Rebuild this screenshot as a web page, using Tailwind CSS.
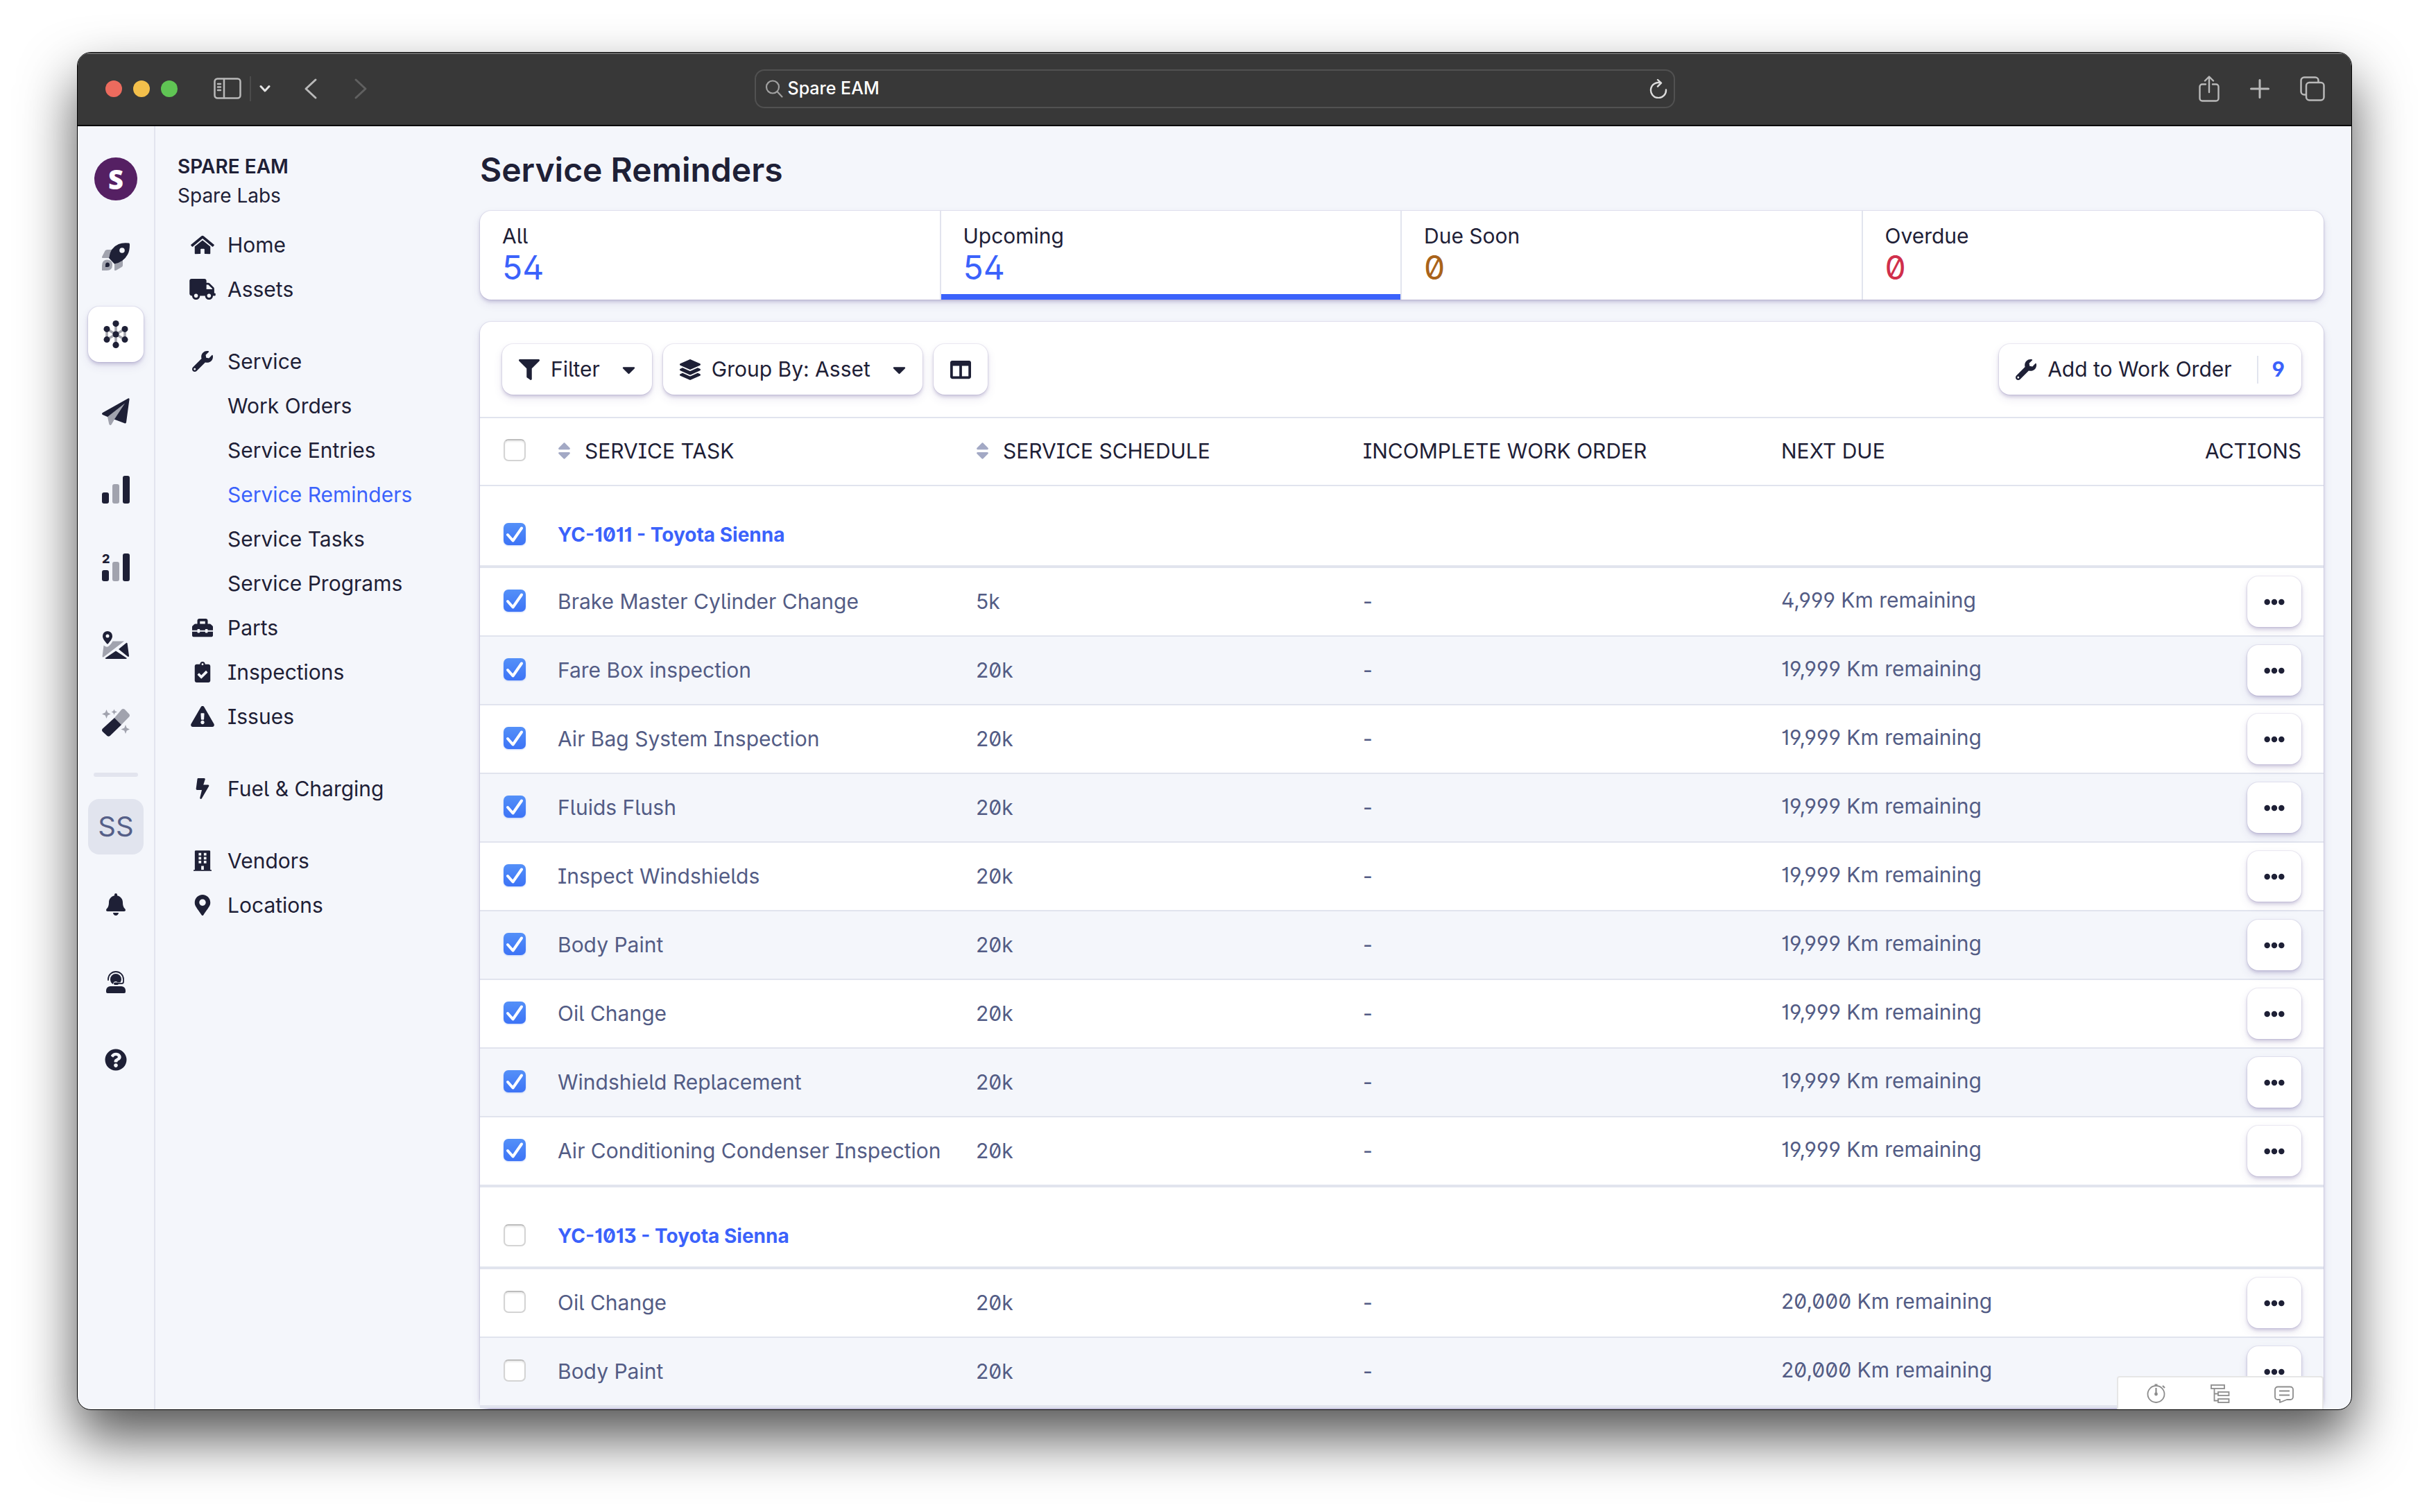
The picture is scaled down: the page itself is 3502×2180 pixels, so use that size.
<!DOCTYPE html>
<html lang="en">
<head>
<meta charset="utf-8">
<title>Spare EAM</title>
<script src="https://cdn.jsdelivr.net/npm/@tailwindcss/browser@4"></script>
</head>
<body class="bg-white font-['Inter',sans-serif] text-[#1e2036]">

<svg class="hidden" aria-hidden="true">
  <symbol id="i-home" viewBox="0 0 576 512"><path d="M280.37 148.26L96 300.11V464a16 16 0 0 0 16 16l112.06-.29a16 16 0 0 0 15.92-16V368a16 16 0 0 1 16-16h64a16 16 0 0 1 16 16v95.64a16 16 0 0 0 16 16.05L464 480a16 16 0 0 0 16-16V300L295.67 148.26a12.19 12.19 0 0 0-15.3 0zM571.6 251.47L318.47 43a48 48 0 0 0-61 0L4.34 251.47a12 12 0 0 0-1.6 16.9l25.5 31A12 12 0 0 0 45.15 301l235.22-193.74a12.19 12.19 0 0 1 15.3 0L530.9 301a12 12 0 0 0 16.9-1.6l25.5-31a12 12 0 0 0-1.7-16.93z"/></symbol>
  <symbol id="i-truck" viewBox="0 0 640 512"><path d="M624 352h-16V243.9c0-12.7-5.1-24.9-14.1-33.9L494 110.1c-9-9-21.2-14.1-33.9-14.1H416V48c0-26.5-21.5-48-48-48H48C21.5 0 0 21.5 0 48v320c0 26.5 21.500 48 48 48h16c0 53 43 96 96 96s96-43 96-96h128c0 53 43 96 96 96s96-43 96-96h48c8.800 0 16-7.200 16-16v-32c0-8.800-7.200-16-16-16zM160 464c-26.500 0-48-21.500-48-48s21.500-48 48-48 48 21.500 48 48-21.500 48-48 48zm320 0c-26.500 0-48-21.500-48-48s21.500-48 48-48 48 21.500 48 48-21.500 48-48 48zm80-208H416V144h44.100l99.900 99.900V256z"/></symbol>
  <symbol id="i-wrench" viewBox="0 0 512 512"><path d="M507.73 109.1c-2.24-9.03-13.54-12.09-20.12-5.51l-74.36 74.36-67.88-11.31-11.31-67.88 74.36-74.36c6.62-6.62 3.43-17.9-5.66-20.16-47.38-11.74-99.55.91-136.58 37.93-39.64 39.64-50.55 97.1-34.05 147.2L18.74 402.76c-24.99 24.99-24.99 65.51 0 90.5 24.99 24.99 65.51 24.99 90.5 0l213.21-213.21c50.12 16.71 107.47 5.68 147.37-34.22 37.07-37.07 49.7-89.32 37.91-136.73zM64 472c-13.25 0-24-10.75-24-24 0-13.26 10.75-24 24-24s24 10.74 24 24c0 13.25-10.75 24-24 24z"/></symbol>
  <symbol id="i-toolbox" viewBox="0 0 512 512"><path d="M502.63 214.63l-45.25-45.25c-6-6-14.14-9.37-22.63-9.37H384V80c0-26.51-21.49-48-48-48H176c-26.51 0-48 21.49-48 48v80H77.25c-8.49 0-16.62 3.37-22.63 9.37L9.37 214.63c-6 6-9.37 14.14-9.37 22.63V320h128v-16c0-8.84 7.16-16 16-16h32c8.84 0 16 7.16 16 16v16h128v-16c0-8.84 7.16-16 16-16h32c8.84 0 16 7.16 16 16v16h128v-82.75c0-8.48-3.37-16.62-9.37-22.62zM320 160H192V96h128v64zm64 208c0 8.84-7.16 16-16 16h-32c-8.84 0-16-7.16-16-16v-16H192v16c0 8.84-7.16 16-16 16h-32c-8.84 0-16-7.16-16-16v-16H0v96c0 17.67 14.33 32 32 32h448c17.67 0 32-14.33 32-32v-96H384v16z"/></symbol>
  <symbol id="i-clip" viewBox="0 0 384 512"><path d="M336 64h-80c0-35.3-28.7-64-64-64s-64 28.7-64 64H48C21.5 64 0 85.5 0 112v352c0 26.5 21.5 48 48 48h288c26.5 0 48-21.5 48-48V112c0-26.5-21.5-48-48-48zM192 40c13.3 0 24 10.7 24 24s-10.7 24-24 24-24-10.7-24-24 10.7-24 24-24zm121.200 231.800l-143 141.800c-4.700 4.700-12.300 4.600-17-.1l-82.600-83.300c-4.700-4.700-4.600-12.300.1-17L99.100 285c4.700-4.700 12.300-4.600 17 .1l46 46.400 106-105.200c4.700-4.700 12.300-4.600 17 .1l28.200 28.400c4.700 4.800 4.600 12.300-.1 17z"/></symbol>
  <symbol id="i-warn" viewBox="0 0 576 512"><path d="M569.517 440.013C587.975 472.007 564.806 512 527.94 512H48.054c-36.937 0-59.999-40.055-41.577-71.987L246.423 23.985c18.467-32.009 64.72-31.951 83.154 0l239.94 416.028zM288 354c-25.405 0-46 20.595-46 46s20.595 46 46 46 46-20.595 46-46-20.595-46-46-46zm-43.673-165.346l7.418 136c.347 6.364 5.609 11.346 11.982 11.346h48.546c6.373 0 11.635-4.982 11.982-11.346l7.418-136c.375-6.874-5.098-12.654-11.982-12.654h-63.383c-6.884 0-12.356 5.78-11.981 12.654z"/></symbol>
  <symbol id="i-bolt" viewBox="0 0 320 512"><path d="M296 160H180.6l42.6-129.8C227.2 15 215.7 0 200 0H56C44 0 33.8 8.9 32.2 20.8l-32 240C-1.7 275.2 9.5 288 24 288h118.7L96.6 482.5c-3.6 15.2 8 29.5 23.3 29.5 8.4 0 16.4-4.4 20.8-12l176-304c9.3-15.9-2.2-36-20.7-36z"/></symbol>
  <symbol id="i-building" viewBox="0 0 448 512"><path fill-rule="evenodd" d="M436 480h-20V24c0-13.300-10.700-24-24-24H56C42.700 0 32 10.700 32 24v456H12c-6.600 0-12 5.400-12 12v20h448v-20c0-6.600-5.400-12-12-12zM128 64h64v64h-64zM256 64h64v64h-64zM128 160h64v64h-64zM256 160h64v64h-64zM128 256h64v64h-64zM256 256h64v64h-64zM192 384h64v96h-64z"/></symbol>
  <symbol id="i-pin" viewBox="0 0 384 512"><path d="M172.268 501.67C26.97 291.031 0 269.413 0 192 0 85.961 85.961 0 192 0s192 85.961 192 192c0 77.413-26.97 99.031-172.268 309.67-9.535 13.774-29.93 13.773-39.464 0zM192 272c44.183 0 80-35.817 80-80s-35.817-80-80-80-80 35.817-80 80 35.817 80 80 80z"/></symbol>
  <symbol id="i-filter" viewBox="0 0 512 512"><path d="M487.976 0H24.028C2.71 0-8.047 25.866 7.058 40.971L192 225.941V432c0 7.831 3.821 15.17 10.237 19.662l80 55.98C298.02 518.69 320 507.493 320 487.98V225.941l184.947-184.97C520.021 25.896 509.338 0 487.976 0z"/></symbol>
  <symbol id="i-layers" viewBox="0 0 512 512"><path d="M12.41 148.02l232.94 105.67c6.8 3.09 14.49 3.09 21.29 0l232.94-105.67c16.55-7.51 16.55-32.52 0-40.03L266.65 2.31a25.607 25.607 0 0 0-21.29 0L12.41 107.98c-16.55 7.51-16.55 32.53 0 40.04zm487.18 88.28l-58.09-26.33-161.64 73.27c-7.56 3.43-15.59 5.17-23.86 5.17s-16.29-1.74-23.86-5.17L70.51 209.97l-58.1 26.33c-16.55 7.5-16.55 32.5 0 40l232.94 105.59c6.8 3.08 14.49 3.08 21.29 0L499.59 276.3c16.55-7.5 16.55-32.5 0-40zm0 127.8l-57.87-26.23-161.86 73.37c-7.56 3.43-15.59 5.17-23.86 5.17s-16.29-1.74-23.86-5.17L70.29 337.87 12.41 364.1c-16.55 7.5-16.55 32.5 0 40l232.94 105.59c6.8 3.08 14.49 3.08 21.29 0L499.59 404.1c16.55-7.5 16.55-32.5 0-40z"/></symbol>
  <symbol id="i-caret" viewBox="0 0 320 512"><path d="M31.3 192h257.3c17.8 0 26.7 21.5 14.1 34.1L174.1 354.8c-7.8 7.8-20.5 7.8-28.3 0L17.2 226.1C4.6 213.5 13.5 192 31.3 192z"/></symbol>
  <symbol id="i-columns" viewBox="0 0 512 512"><path d="M464 32H48C21.49 32 0 53.49 0 80v352c0 26.51 21.49 48 48 48h416c26.51 0 48-21.49 48-48V80c0-26.51-21.49-48-48-48zM224 416H64V160h160v256zm224 0H288V160h160v256z"/></symbol>
  <symbol id="i-sort" viewBox="0 0 320 512"><path d="M41 288h238c21.400 0 32.100 25.900 17 41L177 448c-9.400 9.400-24.600 9.400-33.900 0L24 329c-15.100-15.100-4.400-41 17-41zm255-105L177 64c-9.400-9.400-24.600-9.400-33.900 0L24 183c-15.100 15.100-4.400 41 17 41h238c21.400 0 32.100-25.900 17-41z"/></symbol>
  <symbol id="i-dots" viewBox="0 0 512 512"><path d="M328 256c0 39.8-32.2 72-72 72s-72-32.2-72-72 32.2-72 72-72 72 32.200 72 72zm104-72c-39.800 0-72 32.200-72 72s32.200 72 72 72 72-32.200 72-72-32.200-72-72-72zm-352 0c-39.800 0-72 32.200-72 72s32.200 72 72 72 72-32.200 72-72-32.200-72-72-72z"/></symbol>
  <symbol id="i-bell" viewBox="0 0 448 512"><path d="M224 512c35.32 0 63.97-28.65 63.97-64H160.03c0 35.35 28.65 64 63.97 64zm215.39-149.71c-19.32-20.76-55.47-51.99-55.47-154.29 0-77.7-54.48-139.9-127.94-155.16V32c0-17.67-14.32-32-31.98-32s-31.98 14.33-31.98 32v20.84C118.56 68.1 64.08 130.3 64.08 208c0 102.3-36.15 133.53-55.47 154.29-6 6.45-8.66 14.16-8.61 21.71.11 16.4 12.98 32 32.1 32h383.8c19.12 0 32-15.6 32.1-32 .05-7.55-2.61-15.27-8.61-21.71z"/></symbol>
  <symbol id="i-help" viewBox="0 0 512 512"><path d="M504 256c0 136.997-111.043 248-248 248S8 392.997 8 256C8 119.083 119.043 8 256 8s248 111.083 248 248zM262.655 90c-54.497 0-89.255 22.957-116.549 63.758-3.536 5.286-2.353 12.415 2.715 16.258l34.699 26.31c5.205 3.947 12.621 3.008 16.665-2.122 17.864-22.658 30.113-35.797 57.303-35.797 20.429 0 45.698 13.148 45.698 32.958 0 14.976-12.363 22.667-32.534 33.976C247.128 238.528 216 254.941 216 296v4c0 6.627 5.373 12 12 12h56c6.627 0 12-5.373 12-12v-1.333c0-28.462 83.186-29.647 83.186-106.667 0-58.002-60.165-102-116.531-102zM256 338c-25.365 0-46 20.635-46 46 0 25.364 20.635 46 46 46s46-20.636 46-46c0-25.365-20.635-46-46-46z"/></symbol>
  <symbol id="i-check" viewBox="0 0 32 32"><path d="M6 17l7.500 8.500L26 7.500" fill="none" stroke="#fff" stroke-width="4" stroke-linecap="round" stroke-linejoin="round"/></symbol>
</svg>

<div class="flex h-screen flex-col px-[111px] pt-[75px] pb-[147px]">
  <div class="relative flex min-h-0 flex-1 flex-col overflow-hidden rounded-[20px] border border-black bg-[#f4f6fb] shadow-[0_40px_80px_rgba(0,0,0,0.67)]">

    <!-- Browser toolbar -->
    <header class="grid h-[106px] shrink-0 grid-cols-[1fr_1327px_1fr] items-center border-b-2 border-black bg-[#383838] text-[#b9b9b9] shadow-[inset_0_2px_0_#6b6b6b]">
      <div class="flex items-center pl-10">
        <div class="flex gap-4">
          <span class="size-6 rounded-full bg-[#ec6b5e]"></span>
          <span class="size-6 rounded-full bg-[#f3bf4b]"></span>
          <span class="size-6 rounded-full bg-[#60c554]"></span>
        </div>
        <button class="ml-[52px]" aria-label="Toggle sidebar"><svg class="block h-8 w-10" viewBox="0 0 40 32" fill="none" stroke="currentColor" stroke-width="2.500" stroke-linecap="round"><rect x="1.500" y="1.500" width="37" height="28" rx="4"/><path d="M15 2v27M6 9h4M6 13.500h4M6 18h4"/></svg></button>
        <span class="ml-3 h-9 w-0.5 bg-[#4b4b4b]"></span>
        <button class="ml-3" aria-label="Tab groups"><svg class="block h-3 w-4" viewBox="0 0 16 12" fill="none" stroke="#e4e4e4" stroke-width="3" stroke-linecap="round" stroke-linejoin="round"><path d="M2 2.500l6 6.500 6-6.500"/></svg></button>
        <button class="ml-12" aria-label="Back"><svg class="block h-8 w-5" viewBox="0 0 20 32" fill="none" stroke="currentColor" stroke-width="3" stroke-linecap="round" stroke-linejoin="round"><path d="M17 3L3 16l14 13"/></svg></button>
        <button class="ml-[52px] text-[#606060]" aria-label="Forward"><svg class="block h-8 w-5" viewBox="0 0 20 32" fill="none" stroke="currentColor" stroke-width="3" stroke-linecap="round" stroke-linejoin="round"><path d="M3 3l14 13L3 29"/></svg></button>
      </div>
      <div class="flex h-14 items-center rounded-[14px] border-2 border-[#515151] pr-2 pl-3">
        <svg class="size-7 shrink-0 text-[#a0a0a0]" viewBox="0 0 28 28" fill="none" stroke="currentColor" stroke-width="2.200" stroke-linecap="round"><circle cx="12" cy="11.500" r="9"/><path d="M18.500 18l7 7.500"/></svg>
        <input class="ml-1.5 min-w-0 flex-1 bg-transparent text-[25px] font-medium text-white outline-none" aria-label="Address" value="Spare EAM">
        <button class="text-[#dcdcdc]" aria-label="Reload"><svg class="block h-7 w-7" viewBox="0 0 28 28" fill="none" stroke="currentColor" stroke-width="2.400" stroke-linecap="round" stroke-linejoin="round"><path d="M25 15.500A11 11 0 1 1 17 5.500M13 1l5 4.700-5 5"/></svg></button>
      </div>
      <div class="flex items-center justify-end gap-11 pr-[38px]">
        <button aria-label="Share"><svg class="block h-[38px] w-[30px]" viewBox="0 0 30 38" fill="none" stroke="currentColor" stroke-width="2.400" stroke-linecap="round" stroke-linejoin="round"><path d="M10 12.500H5A3.500 3.500 0 0 0 1.500 16v17A3.500 3.500 0 0 0 5 36.500h20a3.500 3.500 0 0 0 3.500-3.500V16a3.500 3.500 0 0 0-3.500-3.500h-5M15 24V2M9 7.500L15 1.500l6 6"/></svg></button>
        <button aria-label="New tab"><svg class="block size-7" viewBox="0 0 28 28" fill="none" stroke="currentColor" stroke-width="3" stroke-linecap="round"><path d="M14 1.500v25M1.500 14h25"/></svg></button>
        <button aria-label="Tab overview"><svg class="block size-9" viewBox="0 0 36 36" fill="none" stroke="currentColor" stroke-width="2.500" stroke-linejoin="round"><rect x="9" y="9" width="25.500" height="25.500" rx="4.500"/><path d="M9 26.500H6A4.500 4.500 0 0 1 1.500 22V6A4.500 4.500 0 0 1 6 1.500h16A4.500 4.500 0 0 1 26.500 6v3"/></svg></button>
      </div>
    </header>

    <div class="flex min-h-0 flex-1 [font-feature-settings:'ss02','zero','cv01','cv02','cv04','cv05','cv08','cv09']">

      <!-- App rail -->
      <nav class="flex w-28 shrink-0 flex-col items-center gap-8 border-r-2 border-[#e2e4ee] pt-9" aria-label="Apps">
        <a href="#" class="grid size-20 place-items-center" aria-label="Spare"><span class="grid size-[62px] place-items-center rounded-full bg-[#552063] font-['Noto_Sans',sans-serif] text-[38px] leading-none font-black text-white">S</span></a>
        <a href="#" class="grid size-20 place-items-center" aria-label="Launch"><svg class="size-10" viewBox="0 0 40 40"><g fill="#a1a3ae"><path d="M1 22c-1 0-1.300-1-.8-2L4.500 11.500Q5.500 10 7.500 10H15Q11 15 10 22zM30 25v7.500q0 1.500-1.500 2.500L20 40q-2 .8-2-1v-9q7-1 12-5z"/><path d="M0 40v-7q0-8.500 7.500-8.500T15 32q0 8-8 8z"/></g><path d="M39 .6Q40 1 40 3q0 9-3 14-6 11-19 13.500L10 22Q12 7 24 2 30-.5 39 .6z" fill="#1e2036"/><circle cx="29" cy="11" r="3.800" fill="#f4f6fb"/><path d="M5 35v-3q0-3.500 3-3.500t3 3.500q0 3-3 3z" fill="#1e2036"/></svg></a>
        <a href="#" class="grid size-20 place-items-center rounded-2xl bg-white shadow-[0_0_0_1px_rgba(70,50,130,0.08),0_3px_5px_rgba(70,50,130,0.22),0_6px_14px_rgba(70,50,130,0.10)]" aria-label="Network" aria-current="page"><svg class="size-10" viewBox="0 0 40 40"><path d="M20 4v32M7 12.500v15M33 12.500v15M7 12.500l26 15M33 12.500L7 27.500" stroke="#a5a6ae" stroke-width="3.600"/><g fill="#1e2036"><circle cx="20" cy="20" r="4.600"/><circle cx="20" cy="4.600" r="4.600"/><circle cx="20" cy="35.400" r="4.600"/><circle cx="7" cy="12.400" r="4.500"/><circle cx="33" cy="12.400" r="4.500"/><circle cx="7" cy="27.600" r="4.500"/><circle cx="33" cy="27.600" r="4.500"/></g></svg></a>
        <a href="#" class="grid size-20 place-items-center" aria-label="Engage"><svg class="size-10" viewBox="0 0 40 40"><path d="M38 .3Q39.800 0 39.500 2L35 35q-.4 2-2.400 1.300L17.500 30.500 8 27 1 24q-2-1.500 0-3z" fill="#1e2036"/><path d="M33 7.500L8 27l2.300 10.500q1.700 3 3.700 0L18 30.500z" fill="#a1a3ae"/></svg></a>
        <a href="#" class="grid size-20 place-items-center" aria-label="Analytics"><svg class="size-10" viewBox="0 0 40 40"><rect y="24" width="10" height="16" rx="3" fill="#1e2036"/><rect x="15" y="12" width="10" height="28" rx="3" fill="#a1a3ae"/><rect x="30" width="10" height="40" rx="3" fill="#1e2036"/></svg></a>
        <a href="#" class="grid size-20 place-items-center" aria-label="Analytics 2"><svg class="h-12 w-10" viewBox="0 -4 40 48"><text x="0" y="14" font-size="18" font-weight="800" fill="#1e2036">2</text><rect y="24" width="10" height="16" rx="3" fill="#1e2036"/><rect x="15" y="12" width="10" height="28" rx="3" fill="#a1a3ae"/><rect x="30" width="10" height="40" rx="3" fill="#1e2036"/></svg></a>
        <a href="#" class="grid size-20 place-items-center" aria-label="Map"><svg class="size-10" viewBox="0 0 40 40"><path d="M15.500 14.500H32L2 37.500q-1.500.5-1.400-1.500L2.500 20.500q4.500 4 8 .5 3.500-3.500 5-6.500z" fill="#a1a3ae"/><g fill="#1e2036"><path d="M8 0a7 7 0 0 1 7 7.200c0 3.800-4 8.300-6 10.800q-1 1-2 0C5 15.500 1 11 1 7.200A7 7 0 0 1 8 0z"/><path d="M24 26l11-9q1.300-.7 1.600.8L39 35.500q0 2.200-2 1zM20 28.500L36 39q-.5 1-2 1H6.500Q5 40 4.500 39z"/></g><circle cx="8" cy="7" r="2.500" fill="#f4f6fb"/></svg></a>
        <a href="#" class="grid size-20 place-items-center" aria-label="Automations"><svg class="size-10" viewBox="0 0 40 40"><path d="M18 13L28.500.8q2-1.600 4.300 0l6.400 6.600q1.600 2 0 4L28 23zM6.500 1l1.700 4.300L12.500 7.500 8.200 9.500 6.500 14 4.800 9.500 0 7.500l4.800-2.200zM17.500.5l1.200 2.800L22 4.500l-3.300 1.300-1.200 3-1.200-3L13.500 4.500l2.800-1.200zM34 23l1.700 4.500L40 29.500l-4.300 2L34 36l-1.700-4.500-4.800-2 4.800-2z" fill="#a1a3ae"/><path d="M18 13L28 23 11.500 39q-2 1.600-4 0L.8 32.800q-1.600-2 0-4z" fill="#1e2036"/></svg></a>
        <hr class="h-1.5 w-16 shrink-0 rounded-full border-0 bg-[#e2e4ee]">
        <button class="grid size-20 place-items-center rounded-2xl bg-[#e1e4ee] text-[40px] leading-none text-[#555f88]">SS</button>
        <a href="#" class="grid size-20 place-items-center" aria-label="Notifications"><svg class="h-8 w-7 fill-current"><use href="#i-bell"/></svg></a>
        <a href="#" class="grid size-20 place-items-center" aria-label="Support"><svg class="h-8 w-7" viewBox="0 0 28 32" fill="#1e2036"><path d="M6 22h16a6 6 0 0 1 6 6v2a2 2 0 0 1-2 2H2a2 2 0 0 1-2-2v-2a6 6 0 0 1 6-6z"/><path d="M14 4a8 8 0 0 1 8 8q0 2.500-1.500 4.500h-3.500q-1-1.500-3-1.500-3.500 0-4 4Q6 17 6 12a8 8 0 0 1 8-8z"/><path d="M3 13v-1A11 11 0 0 1 25 12v3.500q0 2.700-3 2.700h-8" fill="none" stroke="#1e2036" stroke-width="1.800" stroke-linecap="round"/><rect x="11" y="16.600" width="7" height="3.400" rx="1.700"/></svg></a>
        <a href="#" class="grid size-20 place-items-center" aria-label="Help"><svg class="size-8 fill-current"><use href="#i-help"/></svg></a>
      </nav>

      <!-- Section menu -->
      <aside class="w-[436px] shrink-0 pt-[37px] pl-8">
        <p class="text-[28px] leading-[42px] font-semibold">SPARE EAM</p>
        <p class="text-[28px] leading-[42px]">Spare Labs</p>
        <nav class="mt-[18px] text-[30px]" aria-label="Sections">
          <a href="#" class="flex h-16 items-center gap-4 pl-4"><span class="grid w-10 place-items-center"><svg class="h-[30px] w-[34px] fill-current"><use href="#i-home"/></svg></span>Home</a>
          <a href="#" class="flex h-16 items-center gap-4 pl-4"><span class="grid w-10 place-items-center"><svg class="h-[30px] w-[38px] fill-current"><use href="#i-truck"/></svg></span>Assets</a>
          <a href="#" class="mt-10 flex h-16 items-center gap-4 pl-4"><span class="grid w-10 place-items-center"><svg class="size-[30px] fill-current"><use href="#i-wrench"/></svg></span>Service</a>
          <a href="#" class="flex h-16 items-center pl-[72px]">Work Orders</a>
          <a href="#" class="flex h-16 items-center pl-[72px]">Service Entries</a>
          <a href="#" class="flex h-16 items-center pl-[72px] text-[#3b62fb]" aria-current="page">Service Reminders</a>
          <a href="#" class="flex h-16 items-center pl-[72px]">Service Tasks</a>
          <a href="#" class="flex h-16 items-center pl-[72px]">Service Programs</a>
          <a href="#" class="flex h-16 items-center gap-4 pl-4"><span class="grid w-10 place-items-center"><svg class="size-[30px] fill-current"><use href="#i-toolbox"/></svg></span>Parts</a>
          <a href="#" class="flex h-16 items-center gap-4 pl-4"><span class="grid w-10 place-items-center"><svg class="h-[30px] w-6 fill-current"><use href="#i-clip"/></svg></span>Inspections</a>
          <a href="#" class="flex h-16 items-center gap-4 pl-4"><span class="grid w-10 place-items-center"><svg class="h-[30px] w-[34px] fill-current"><use href="#i-warn"/></svg></span>Issues</a>
          <a href="#" class="mt-10 flex h-16 items-center gap-4 pl-4"><span class="grid w-10 place-items-center"><svg class="h-[30px] w-5 fill-current"><use href="#i-bolt"/></svg></span>Fuel &amp; Charging</a>
          <a href="#" class="mt-10 flex h-16 items-center gap-4 pl-4"><span class="grid w-10 place-items-center"><svg class="h-[30px] w-[26px] fill-current"><use href="#i-building"/></svg></span>Vendors</a>
          <a href="#" class="flex h-16 items-center gap-4 pl-4"><span class="grid w-10 place-items-center"><svg class="h-[30px] w-6 fill-current"><use href="#i-pin"/></svg></span>Locations</a>
        </nav>
      </aside>

      <main class="min-w-0 flex-1 pt-8 pr-10 pl-8">
        <h1 class="text-[48px] leading-[62px] font-semibold">Service Reminders</h1>

        <div class="mt-7 grid h-32 grid-cols-4 overflow-hidden rounded-2xl bg-white text-[30px] shadow-[0_0_0_1px_rgba(70,50,130,0.08),0_3px_5px_rgba(70,50,130,0.22),0_6px_14px_rgba(70,50,130,0.10)]">
          <button class="flex flex-col items-start border-r-2 border-[#e2e4ee] px-8 pt-4"><span class="leading-10">All</span><span class="text-[48px] leading-[52px] text-[#3b62fb]">54</span></button>
          <button class="flex flex-col items-start border-r-2 border-[#e2e4ee] px-8 pt-4 shadow-[inset_0_-8px_0_#3b62fb]"><span class="leading-10">Upcoming</span><span class="text-[48px] leading-[52px] text-[#3b62fb]">54</span></button>
          <button class="flex flex-col items-start border-r-2 border-[#e2e4ee] px-8 pt-4"><span class="leading-10">Due Soon</span><span class="text-[48px] leading-[52px] text-[#a9631a]">0</span></button>
          <button class="flex flex-col items-start px-8 pt-4"><span class="leading-10">Overdue</span><span class="text-[48px] leading-[52px] text-[#d02f4b]">0</span></button>
        </div>

        <section class="mt-8 rounded-2xl bg-white text-[30px] shadow-[0_0_0_1px_rgba(70,50,130,0.08),0_3px_5px_rgba(70,50,130,0.22),0_6px_14px_rgba(70,50,130,0.10)]">
          <div class="flex items-center gap-4 border-b-2 border-[#e1e4ee] p-8">
            <button class="flex h-[73px] items-center rounded-2xl bg-white px-6 shadow-[0_0_0_1px_rgba(70,50,130,0.08),0_3px_5px_rgba(70,50,130,0.22),0_6px_14px_rgba(70,50,130,0.10)]"><svg class="mr-4 size-[30px] fill-current"><use href="#i-filter"/></svg>Filter<svg class="ml-8 h-[30px] w-[19px] fill-current"><use href="#i-caret"/></svg></button>
            <button class="flex h-[73px] items-center rounded-2xl bg-white px-6 shadow-[0_0_0_1px_rgba(70,50,130,0.08),0_3px_5px_rgba(70,50,130,0.22),0_6px_14px_rgba(70,50,130,0.10)]"><svg class="mr-4 size-[30px] fill-current"><use href="#i-layers"/></svg>Group By: Asset<svg class="ml-8 h-[30px] w-[19px] fill-current"><use href="#i-caret"/></svg></button>
            <button class="flex h-[73px] items-center rounded-2xl bg-white px-6 shadow-[0_0_0_1px_rgba(70,50,130,0.08),0_3px_5px_rgba(70,50,130,0.22),0_6px_14px_rgba(70,50,130,0.10)]" aria-label="Columns"><svg class="size-[30px] fill-current"><use href="#i-columns"/></svg></button>
            <button class="ml-auto flex h-[73px] items-center rounded-2xl bg-white px-6 shadow-[0_0_0_1px_rgba(70,50,130,0.08),0_3px_5px_rgba(70,50,130,0.22),0_6px_14px_rgba(70,50,130,0.10)]"><svg class="mr-4 size-[30px] fill-current"><use href="#i-wrench"/></svg>Add to Work Order<span class="ml-9 flex h-10 items-center border-l-2 border-[#e1e4ee] pl-5 font-bold text-[#3b62fb]">9</span></button>
          </div>

          <table class="w-full table-fixed border-separate border-spacing-0 text-left">
            <colgroup><col class="w-24"><col class="w-[603px]"><col class="w-[558px]"><col class="w-[603px]"><col></colgroup>
            <thead>
              <tr class="h-[98px]">
                <th class="border-b-2 border-[#e1e4ee] pb-1 pl-[34px]"><input type="checkbox" aria-label="Select all" class="block size-8 appearance-none rounded-[7px] border-2 border-[#d4d4d4] border-t-[#bdbdbd] bg-white shadow-[inset_0_2px_2px_rgba(0,0,0,0.08)]"></th>
                <th class="border-b-2 border-[#e1e4ee] pb-0.5 pl-4 font-normal"><span class="flex items-center gap-5"><svg class="h-[30px] w-[19px] fill-[#a3a9c5]"><use href="#i-sort"/></svg>SERVICE TASK</span></th>
                <th class="border-b-2 border-[#e1e4ee] pb-0.5 pl-4 font-normal"><span class="flex items-center gap-5"><svg class="h-[30px] w-[19px] fill-[#a3a9c5]"><use href="#i-sort"/></svg>SERVICE SCHEDULE</span></th>
                <th class="border-b-2 border-[#e1e4ee] pb-0.5 pl-4 font-normal">INCOMPLETE WORK ORDER</th>
                <th class="border-b-2 border-[#e1e4ee] pr-8 pb-0.5 pl-4 font-normal"><span class="flex justify-between"><span>NEXT DUE</span><span>ACTIONS</span></span></th>
              </tr>
            </thead>
            <tbody id="rows"></tbody>
          </table>
        </section>
      </main>
    </div>

    <!-- Docked tool strip -->
    <div class="absolute right-10 bottom-0 flex h-12 w-[298px] items-center justify-center gap-16 rounded-t border-2 border-b-0 border-[#e6e6e6] bg-white text-[#8d8d8d]">
      <button aria-label="Timer"><svg class="block size-7" viewBox="0 0 28 28" fill="none" stroke="currentColor" stroke-width="1.800"><circle cx="13.500" cy="15" r="12"/><path d="M11.500 1.500h4M13.500 6v10M23 3l3 3" stroke-width="2.200"/><circle cx="13.500" cy="15" r="1.500" fill="currentColor"/></svg></button>
      <button aria-label="Outline"><svg class="block size-7" viewBox="0 0 28 28" fill="none" stroke="currentColor" stroke-width="1.800"><rect x="1" y="2" width="19" height="5"/><rect x="11" y="12" width="15.500" height="5"/><rect x="11" y="22" width="15.500" height="5"/><path d="M5.500 7v17.500H11M5.500 14.500H11"/></svg></button>
      <button aria-label="Comments"><svg class="block size-7" viewBox="0 0 28 28" fill="none" stroke="currentColor" stroke-width="1.800" stroke-linejoin="round"><path d="M5 4.500h18a4 4 0 0 1 4 4V19a4 4 0 0 1-4 4h-5l-10 4v-4H5a4 4 0 0 1-4-4V8.500a4 4 0 0 1 4-4zM7 10.500h15M7 16.500h15"/></svg></button>
    </div>
  </div>
</div>

<script>
const groups = [
  { name: "YC-1011 - Toyota Sienna", checked: true, rows: [
    ["Brake Master Cylinder Change", "5k", "4,999"],
    ["Fare Box inspection", "20k", "19,999"],
    ["Air Bag System Inspection", "20k", "19,999"],
    ["Fluids Flush", "20k", "19,999"],
    ["Inspect Windshields", "20k", "19,999"],
    ["Body Paint", "20k", "19,999"],
    ["Oil Change", "20k", "19,999"],
    ["Windshield Replacement", "20k", "19,999"],
    ["Air Conditioning Condenser Inspection", "20k", "19,999"] ] },
  { name: "YC-1013 - Toyota Sienna", checked: false, rows: [
    ["Oil Change", "20k", "20,000"],
    ["Body Paint", "20k", "20,000"] ] }
];
const box = (label, on) => `<label class="grid size-8"><input type="checkbox" aria-label="${label}" ${on ? "checked" : ""} class="peer col-start-1 row-start-1 block size-8 appearance-none rounded-[7px] border-2 border-[#d4d4d4] border-t-[#bdbdbd] bg-white shadow-[inset_0_2px_2px_rgba(0,0,0,0.08)] checked:border-0 checked:bg-linear-to-b checked:from-[#5490f8] checked:to-[#3d73f6] checked:shadow-[0_1px_2px_rgba(61,115,246,0.3)]"><svg class="pointer-events-none col-start-1 row-start-1 hidden size-8 peer-checked:block"><use href="#i-check"/></svg></label>`;
let html = "";
for (const g of groups) {
  html += `<tr class="h-[118px]"><td class="border-b-4 border-[#e1e4ee] pt-6 pl-[34px]">${box(g.name, g.checked)}</td><th colspan="4" class="border-b-4 border-[#e1e4ee] pt-6 pl-4 font-bold text-[#3b62fb]"><a href="#" class="text-[28px]">${g.name}</a></th></tr>`;
  g.rows.forEach((r, i) => {
    const last = i === g.rows.length - 1;
    const line = last ? "border-b-4 border-[#e1e4ee]" : "border-b-2 border-[#e1e4ee]";
    html += `<tr class="${last ? "h-[101px]" : "h-[99px]"} text-[#535c85] ${i % 2 ? "bg-[#f4f6fb]" : "bg-white"}">
      <td class="${line} pb-1 pl-[34px]">${box(r[0], g.checked)}</td>
      <td class="${line} pl-4 whitespace-nowrap">${r[0]}</td>
      <td class="${line} pl-4">${r[1]}</td>
      <td class="${line} pl-4">-</td>
      <td class="${line} pr-8 pl-4"><span class="flex items-center justify-between"><span class="pb-1">${r[2]} Km remaining</span><button class="grid h-[73px] w-[78px] place-items-center rounded-2xl bg-white text-[#1e2036] shadow-[0_0_0_1px_rgba(70,50,130,0.08),0_3px_5px_rgba(70,50,130,0.22),0_6px_14px_rgba(70,50,130,0.10)]" aria-label="Actions for ${r[0]}"><svg class="size-[30px] fill-current"><use href="#i-dots"/></svg></button></span></td></tr>`;
  });
}
document.getElementById("rows").innerHTML = html;
</script>
</body>
</html>
